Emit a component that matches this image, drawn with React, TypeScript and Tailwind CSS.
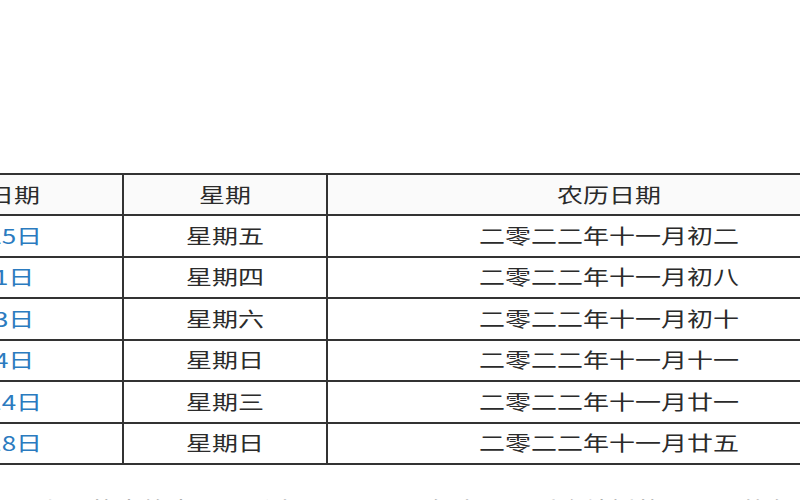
import React from "react";

const rows = [
  ["2022年11月25日", "星期五", "二零二二年十一月初二"],
  ["2022年12月1日", "星期四", "二零二二年十一月初八"],
  ["2022年12月3日", "星期六", "二零二二年十一月初十"],
  ["2022年12月4日", "星期日", "二零二二年十一月十一"],
  ["2022年12月14日", "星期三", "二零二二年十一月廿一"],
  ["2022年12月18日", "星期日", "二零二二年十一月廿五"],
];

function W({ children, right }: { children: React.ReactNode; right?: boolean }) {
  return (
    <span className={"inline-block scale-x-[1.3] whitespace-nowrap " + (right ? "origin-right" : "origin-center")}>
      {children}
    </span>
  );
}

export default function App() {
  return (
    <div
      className="w-[800px] h-[500px] overflow-hidden bg-white text-[#2b2b2b]"
      style={{ fontFamily: '"Noto Sans CJK SC", "Noto Sans", sans-serif' }}
    >
      <div className="pt-[173px] ml-[-234px]">
        <table className="border-collapse table-fixed w-[1124px] text-[20px]">
          <colgroup>
            <col className="w-[356px]" />
            <col className="w-[204px]" />
            <col className="w-[564px]" />
          </colgroup>
          <thead>
            <tr className="h-[41px] bg-[#fafafa]">
              <th className="border-2 border-[#333] font-normal text-right pr-[82px]">
                <W right>公历日期</W>
              </th>
              <th className="border-2 border-[#333] font-normal text-center">
                <W>星期</W>
              </th>
              <th className="border-2 border-[#333] font-normal text-center">
                <W>农历日期</W>
              </th>
            </tr>
          </thead>
          <tbody>
            {rows.map((r, i) => (
              <tr key={i} className="h-[41.5px]">
                <td className="border-2 border-[#333] text-center text-[#2b7bbf]">
                  <W>{r[0]}</W>
                </td>
                <td className="border-2 border-[#333] text-center">
                  <W>{r[1]}</W>
                </td>
                <td className="border-2 border-[#333] text-center">
                  <W>{r[2]}</W>
                </td>
              </tr>
            ))}
          </tbody>
        </table>
      </div>
      <p className="mt-[29px] pl-[12px] text-[20px] leading-[30px] whitespace-nowrap text-[#999]">
        <span className="inline-block scale-x-[1.3] origin-left">
          从上面的表格中可以看出，二零二二年十一月适合结婚的日子一共有六天。
        </span>
      </p>
    </div>
  );
}
